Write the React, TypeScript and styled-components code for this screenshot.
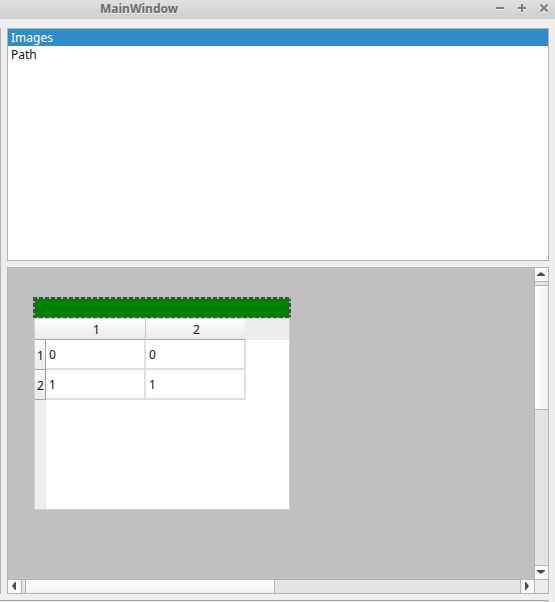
import React, { useState } from "react";
import styled, { createGlobalStyle } from "styled-components";

const line = "#b4b4b4";
const chrome = "#eeeeee";

const GlobalStyle = createGlobalStyle`
  * { box-sizing: border-box; }
  body {
    margin: 0;
    background: ${chrome};
    color: #111;
    font: 12px/17px "Noto Sans", "Open Sans", sans-serif;
  }
  button { font: inherit; padding: 0; border: 0; }
`;

const Window = styled.div`
  display: flex;
  flex-direction: column;
  height: 100vh;
  min-height: 400px;
  overflow: hidden;
`;

const TitleBar = styled.header`
  display: flex;
  align-items: flex-start;
  height: 19px;
  flex: none;
  padding: 0 5px 0 100px;
  background: linear-gradient(#e0e0e0, #cecece);
`;

const Title = styled.h1`
  flex: 1;
  margin: 0;
  font-size: 12px;
  line-height: 17px;
  font-weight: 700;
  color: #6c6c6c;
  text-shadow: 0 1px 0 #ececec;
`;

const WindowButtons = styled.div`
  display: flex;
  gap: 10px;
`;

const WindowButton = styled.button`
  display: flex;
  align-items: center;
  justify-content: center;
  width: 12px;
  height: 16px;
  background: none;
  color: #7e7e7e;
  svg { filter: drop-shadow(0 1px 0 #f0f0f0); }
`;

const Content = styled.div`
  display: flex;
  flex: 1;
  min-height: 0;
  gap: 6px;
  padding: 9px 6px 6px 0;
`;

const SidePanelEdge = styled.div`
  width: 1px;
  background: ${line};
`;

const MainColumn = styled.main`
  display: flex;
  flex-direction: column;
  flex: 1;
  min-width: 0;
  gap: 6px;
`;

const List = styled.ul`
  flex: 233;
  min-height: 0;
  margin: 0;
  padding: 0;
  list-style: none;
  background: #fff;
  border: 1px solid ${line};
`;

const ListButton = styled.button<{ $selected: boolean }>`
  display: block;
  width: 100%;
  height: 17px;
  padding: 0 3px;
  text-align: left;
  background: ${(p) => (p.$selected ? "#308cc6" : "transparent")};
  color: ${(p) => (p.$selected ? "#fff" : "#111")};
`;

const ScrollArea = styled.section`
  display: grid;
  grid-template-columns: minmax(0, 1fr) 14px;
  grid-template-rows: minmax(0, 1fr) 14px;
  flex: 327;
  min-height: 0;
  border: 1px solid ${line};
`;

const Canvas = styled.div`
  overflow: hidden;
  padding: 29px 25px;
  background: #c0c0c0;
`;

const Node = styled.div`
  width: 258px;
`;

const dashes = "#4a4a4a 0 4px, #a4aca4 4px 6px";

const NodeHandle = styled.div`
  height: 21px;
  background:
    repeating-linear-gradient(90deg, ${dashes}) 0 0 / 100% 2px no-repeat,
    repeating-linear-gradient(90deg, ${dashes}) 0 100% / 100% 1px no-repeat,
    repeating-linear-gradient(${dashes}) 0 0 / 2px 100% no-repeat,
    repeating-linear-gradient(${dashes}) 100% 0 / 2px 100% no-repeat,
    #008000;
`;

const TableFrame = styled.div`
  height: 192px;
  margin: 0 1px;
  border: 1px solid #d0d0d0;
  background:
    linear-gradient(${chrome}, ${chrome}) 0 0 / 100% 21px no-repeat,
    linear-gradient(${chrome}, ${chrome}) 0 0 / 11px 100% no-repeat,
    #fff;
`;

const Table = styled.table`
  table-layout: fixed;
  width: 211px;
  border-collapse: separate;
  border-spacing: 0;
`;

const CornerCell = styled.td`
  width: 11px;
  height: 21px;
  padding: 0;
  background: linear-gradient(#fcfcfc, #ebebeb);
  border-bottom: 1px solid #a4a4a4;
`;

const ColumnHeader = styled.th`
  height: 21px;
  padding: 0 0 0 2px;
  font-weight: 400;
  text-align: center;
  background: linear-gradient(#fcfcfc, #ebebeb);
  border-bottom: 1px solid #a4a4a4;
  border-right: 1px solid #c6c6c6;
  &:last-child { border-right-color: #ebebeb; }
`;

const RowHeader = styled.th`
  height: 30px;
  padding: 2px 0 0 1px;
  font-weight: 400;
  text-align: center;
  background: linear-gradient(#fcfcfc, #ebebeb);
  border-right: 1px solid #a4a4a4;
  border-bottom: 1px solid #a4a4a4;
`;

const Cell = styled.td`
  height: 30px;
  padding: 1px 3px 0;
  border-right: 2px solid #e0e0e0;
  border-bottom: 2px solid #e0e0e0;
`;

const ScrollBar = styled.div<{ $vertical?: boolean }>`
  display: flex;
  flex-direction: ${(p) => (p.$vertical ? "column" : "row")};
  min-width: 0;
  min-height: 0;
  background: #e4e4e4;
  border: 0 solid ${line};
  border-width: ${(p) => (p.$vertical ? "0 0 0 1px" : "1px 0 0")};
`;

const Stepper = styled.button<{ $edge: "top" | "bottom" | "left" | "right" }>`
  display: flex;
  align-items: center;
  justify-content: center;
  flex: 0 0 14px;
  padding: 0 1px 1px 0;
  background: #fafafa;
  color: #4c4c4c;
  border-${(p) => p.$edge}: 1px solid ${line};
`;

const Groove = styled.div<{ $grow?: number }>`
  flex: ${(p) => (p.$grow ? `${p.$grow} 1 0` : "0 0 3px")};
`;

const Thumb = styled.div<{ $vertical?: boolean; $grow: number }>`
  flex: ${(p) => p.$grow} 1 0;
  background: linear-gradient(${(p) => (p.$vertical ? "to right" : "to bottom")}, #fff, #f0f0f0);
  border: 0 solid ${line};
  border-width: ${(p) => (p.$vertical ? "1px 0" : "0 1px")};
`;

const ScrollCorner = styled.div`
  background: ${chrome};
  border-top: 1px solid ${line};
  border-left: 1px solid ${line};
`;

const BottomPanel = styled.footer`
  flex: none;
  height: 2px;
  margin-right: 6px;
  background: #e4e4e4;
  border-top: 1px solid #a8a8a8;
  border-top-right-radius: 2px;
`;

type Direction = "up" | "down" | "left" | "right";

const arrows: Record<Direction, { w: number; h: number; d: string }> = {
  up: { w: 8, h: 4, d: "M0 4V3L4 0L8 3V4Z" },
  down: { w: 8, h: 4, d: "M0 0V1L4 4L8 1V0Z" },
  left: { w: 4, h: 8, d: "M4 0H3L0 4L3 8H4Z" },
  right: { w: 4, h: 8, d: "M0 0H1L4 4L1 8H0Z" },
};

function Arrow({ direction }: { direction: Direction }) {
  const { w, h, d } = arrows[direction];
  return (
    <svg width={w} height={h} viewBox={`0 0 ${w} ${h}`} aria-hidden="true">
      <path d={d} fill="currentColor" />
    </svg>
  );
}

function ControlIcon({ d }: { d: string }) {
  return (
    <svg width="8" height="8" viewBox="0 0 8 8" aria-hidden="true">
      <path d={d} fill="none" stroke="currentColor" strokeWidth="2" />
    </svg>
  );
}

const controls = [
  { label: "Minimize", d: "M0 4H8" },
  { label: "Maximize", d: "M0 4H8M4 0V8" },
  { label: "Close", d: "M0.5 0.5L7.5 7.5M7.5 0.5L0.5 7.5" },
];

const items = ["Images", "Path"];
const columns = ["1", "2"];
const rows = [
  ["0", "0"],
  ["1", "1"],
];

export default function App() {
  const [selected, setSelected] = useState("Images");

  return (
    <>
      <GlobalStyle />
      <Window>
        <TitleBar>
          <Title>MainWindow</Title>
          <WindowButtons>
            {controls.map((c) => (
              <WindowButton key={c.label} type="button" aria-label={c.label}>
                <ControlIcon d={c.d} />
              </WindowButton>
            ))}
          </WindowButtons>
        </TitleBar>
        <Content>
          <SidePanelEdge />
          <MainColumn>
            <List>
              {items.map((item) => (
                <li key={item}>
                  <ListButton
                    type="button"
                    $selected={item === selected}
                    aria-pressed={item === selected}
                    onClick={() => setSelected(item)}
                  >
                    {item}
                  </ListButton>
                </li>
              ))}
            </List>
            <ScrollArea>
              <Canvas>
                <Node>
                  <NodeHandle />
                  <TableFrame>
                    <Table>
                      <colgroup>
                        <col width="11" />
                        <col width="100" />
                        <col width="100" />
                      </colgroup>
                      <thead>
                        <tr>
                          <CornerCell />
                          {columns.map((c) => (
                            <ColumnHeader key={c} scope="col">{c}</ColumnHeader>
                          ))}
                        </tr>
                      </thead>
                      <tbody>
                        {rows.map((row, r) => (
                          <tr key={r}>
                            <RowHeader scope="row">{r + 1}</RowHeader>
                            {row.map((value, c) => (
                              <Cell key={c}>{value}</Cell>
                            ))}
                          </tr>
                        ))}
                      </tbody>
                    </Table>
                  </TableFrame>
                </Node>
              </Canvas>
              <ScrollBar $vertical>
                <Stepper type="button" aria-label="Scroll up" $edge="bottom">
                  <Arrow direction="up" />
                </Stepper>
                <Groove />
                <Thumb $vertical $grow={124} />
                <Groove $grow={156} />
                <Stepper type="button" aria-label="Scroll down" $edge="top">
                  <Arrow direction="down" />
                </Stepper>
              </ScrollBar>
              <ScrollBar>
                <Stepper type="button" aria-label="Scroll left" $edge="right">
                  <Arrow direction="left" />
                </Stepper>
                <Groove />
                <Thumb $grow={249} />
                <Groove $grow={246} />
                <Stepper type="button" aria-label="Scroll right" $edge="left">
                  <Arrow direction="right" />
                </Stepper>
              </ScrollBar>
              <ScrollCorner />
            </ScrollArea>
          </MainColumn>
        </Content>
        <BottomPanel />
      </Window>
    </>
  );
}
